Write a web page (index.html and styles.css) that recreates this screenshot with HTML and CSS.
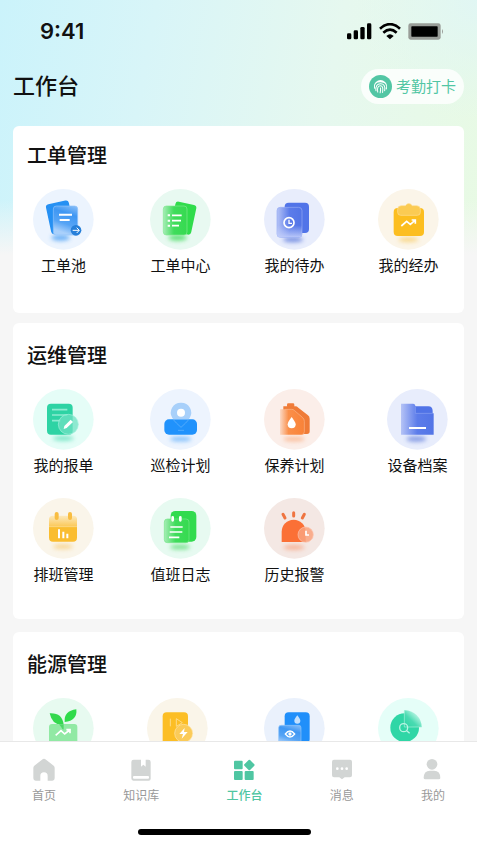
FILE: index.html
```
<!DOCTYPE html>
<html lang="zh-CN">
<head>
  <meta charset="UTF-8">
  <meta name="viewport" content="width=device-width, initial-scale=1.0">
  <title>工作台</title>
  <link rel="stylesheet" href="styles.css">
</head>
<body>
  <!-- shared gradients -->
  <svg class="defs" width="0" height="0" aria-hidden="true">
    <defs>
      <filter id="blur" x="-50%" y="-150%" width="200%" height="400%"><feGaussianBlur stdDeviation="7"/></filter>
      <linearGradient id="gBlue" x1="1" y1="0" x2="0.7" y2="1"><stop offset="0" stop-color="#8cc0f8"/><stop offset="0.35" stop-color="#3f97f3"/><stop offset="0.7" stop-color="#56a4f5"/><stop offset="1" stop-color="#a9d0fb"/></linearGradient>
      <linearGradient id="gGreen" x1="0" y1="0" x2="1" y2="0"><stop offset="0" stop-color="#a5edb5"/><stop offset="0.45" stop-color="#3fdc5b"/><stop offset="1" stop-color="#36da50"/></linearGradient>
      <linearGradient id="gIndigo" x1="0" y1="0" x2="1" y2="0"><stop offset="0" stop-color="#b5c3f6"/><stop offset="0.5" stop-color="#5c7cea"/><stop offset="1" stop-color="#5274e6"/></linearGradient>
      <linearGradient id="gIndigoDown" x1="0" y1="0" x2="0" y2="1"><stop offset="0.6" stop-color="#c3cffa" stop-opacity="0"/><stop offset="1" stop-color="#c3cffa" stop-opacity="0.9"/></linearGradient>
      <linearGradient id="gOrange" x1="0" y1="0" x2="1" y2="0"><stop offset="0" stop-color="#fbd9c5"/><stop offset="0.35" stop-color="#fa8f4a"/><stop offset="1" stop-color="#f98238"/></linearGradient>
      <linearGradient id="gYellow" x1="0" y1="0" x2="0" y2="1"><stop offset="0" stop-color="#fce9bd"/><stop offset="1" stop-color="#fbc95a"/></linearGradient>
      <linearGradient id="gTeal" x1="0" y1="1" x2="1" y2="0"><stop offset="0" stop-color="#2bd4a3"/><stop offset="0.4" stop-color="#4bdbb2"/><stop offset="0.8" stop-color="#c8f8ea"/></linearGradient>
    </defs>
  </svg>

  <div class="app">
    <div class="status-bar">
      <span class="time">9:41</span>
      <div class="status-icons">
        <svg width="25" height="17" viewBox="0 0 75 51">
          <rect x="0" y="31" width="13" height="18" rx="4"/><rect x="20" y="22" width="13" height="27" rx="4"/><rect x="40" y="12" width="13" height="37" rx="4"/><rect x="60" y="1" width="13" height="48" rx="4"/>
        </svg>
        <svg width="22" height="17" viewBox="0 0 66 51">
          <path d="M3 17Q33-10 63 17" fill="none" stroke="#000" stroke-width="8"/>
          <path d="M13 29Q33 11 53 29" fill="none" stroke="#000" stroke-width="8"/>
          <path d="M22 39Q33 29 44 39L33 49Z"/>
        </svg>
        <svg width="36" height="17" viewBox="0 0 108 51">
          <rect x="1" y="1" width="97" height="49" rx="7" fill="#999d98"/>
          <rect x="10" y="10" width="79" height="31" rx="2"/>
          <path d="M102 18Q108 25 102 33Z" fill="#999d98"/>
        </svg>
      </div>
    </div>

    <header class="header">
      <h1>工作台</h1>
      <button class="btn-punch" type="button">
        <svg width="23" height="23" viewBox="0 0 66 66" fill="none" stroke="#fff" stroke-width="3" stroke-linecap="round">
          <circle cx="33" cy="33" r="33" fill="#52c6a4" stroke="none"/>
          <path d="M20 22Q33 10 46 22M16 38Q12 19 33 19Q54 19 50 40M20 45Q18 25 33 25Q48 25 45 45M25 49Q22 31 33 31Q42 31 39 50M32 51Q34 44 33 37"/>
        </svg>
        <span>考勤打卡</span>
      </button>
    </header>

    <main class="content">
      <section class="card card-order">
        <h2>工单管理</h2>
        <div class="grid">
          <a class="entry" href="#">
            <svg viewBox="0 0 183 183">
              <circle cx="91" cy="91" r="91" fill="#ecf4fe"/>
              <ellipse class="shadow" cx="83" cy="146" rx="28" ry="9" fill="#4a9ff5"/>
              <rect x="46" y="39" width="70" height="92" rx="9" fill="#2590f3" transform="rotate(-12 81 85)"/>
              <rect x="61" y="51" width="73" height="87" rx="9" fill="url(#gBlue)" stroke="#8fc3fa" stroke-width="2"/>
              <path d="M78 77H117M80 93H110" stroke="#fff" stroke-width="6"/>
              <circle cx="129" cy="124" r="16" fill="#267fd9"/>
              <path d="M119 124H138M131 116L139 124L131 132" fill="none" stroke="#fff" stroke-width="3"/>
            </svg>
            <span>工单池</span>
          </a>
          <a class="entry" href="#">
            <svg viewBox="0 0 183 183">
              <circle cx="91" cy="91" r="91" fill="#e8f9f1"/>
              <ellipse class="shadow" cx="83" cy="146" rx="28" ry="9" fill="#3fdc5b"/>
              <rect x="68" y="42" width="64" height="91" rx="9" fill="#30dc4c" transform="rotate(12 100 87)"/>
              <rect x="40" y="51" width="71" height="87" rx="9" fill="url(#gGreen)" stroke="#83e993" stroke-width="2"/>
              <path d="M66 79H95M66 95H93M66 110H87" stroke="#fff" stroke-width="5"/>
              <path d="M53 79H60M53 95H60M53 110H60" stroke="#fff" stroke-width="6"/>
            </svg>
            <span>工单中心</span>
          </a>
          <a class="entry" href="#">
            <svg viewBox="0 0 183 183">
              <circle cx="91" cy="91" r="91" fill="#e8edfc"/>
              <ellipse class="shadow" cx="87" cy="152" rx="30" ry="8" fill="#5c79dc"/>
              <rect x="62" y="41" width="73" height="91" rx="12" fill="#5174e8"/>
              <rect x="39" y="55" width="75" height="90" rx="10" fill="url(#gIndigo)" stroke="#96abf4" stroke-width="2"/>
              <rect x="39" y="55" width="75" height="90" rx="10" fill="url(#gIndigoDown)"/>
              <circle cx="75" cy="101" r="15" fill="none" stroke="#fff" stroke-width="5"/>
              <path d="M75 92V103H84" fill="none" stroke="#fff" stroke-width="4"/>
            </svg>
            <span>我的待办</span>
          </a>
          <a class="entry" href="#">
            <svg viewBox="0 0 183 183">
              <circle cx="91" cy="91" r="91" fill="#fbf5e9"/>
              <ellipse class="shadow" cx="91" cy="152" rx="30" ry="7" fill="#f8cf6d"/>
              <rect x="47" y="57" width="91" height="84" rx="12" fill="#fcbe20"/>
              <path d="M59 61Q59 50 70 50H82Q92 37 103 50H116Q127 50 127 61V70Q127 79 118 79H68Q59 79 59 70Z" fill="#fbcb53" stroke="#fde09a" stroke-width="2"/>
              <path d="M70 111L86 97L97 106L111 94M101 93H112V104" fill="none" stroke="#fff" stroke-width="5"/>
            </svg>
            <span>我的经办</span>
          </a>
        </div>
      </section>

      <section class="card card-ops">
        <h2>运维管理</h2>
        <div class="grid">
          <a class="entry" href="#">
            <svg viewBox="0 0 183 183">
              <circle cx="91" cy="91" r="91" fill="#e5fdf7"/>
              <ellipse class="shadow" cx="91" cy="148" rx="32" ry="7" fill="#5ce0b9"/>
              <rect x="42" y="44" width="77" height="93" rx="12" fill="#2ed3a4"/>
              <path d="M57 62H103M57 78H103M57 95H82" stroke="#8cebd0" stroke-width="5"/>
              <circle cx="106" cy="106" r="30" fill="#6fe2c3" fill-opacity="0.75" stroke="#a5f1de" stroke-width="2"/>
              <path d="M94 111L113 92L120 99L101 117L92 120Z" fill="#fff"/>
            </svg>
            <span>我的报单</span>
          </a>
          <a class="entry" href="#">
            <svg viewBox="0 0 183 183">
              <circle cx="91" cy="91" r="91" fill="#edf4fe"/>
              <ellipse class="shadow" cx="92" cy="150" rx="32" ry="7" fill="#65b1fb"/>
              <rect x="43" y="91" width="98" height="46" rx="14" fill="#2092fc"/>
              <path d="M93 41A30 30 0 0 1 119 87L116 91H70L67 87A30 30 0 0 1 93 41Z" fill="#a8d0fa"/>
              <path d="M69 91Q78 102 93 115Q108 102 117 91M84 124H102" fill="none" stroke="#6ab6fc" stroke-width="2"/>
              <circle cx="93" cy="71" r="12" fill="#fff"/>
            </svg>
            <span>巡检计划</span>
          </a>
          <a class="entry" href="#">
            <svg viewBox="0 0 183 183">
              <circle cx="91" cy="91" r="91" fill="#fbeee9"/>
              <ellipse class="shadow" cx="90" cy="150" rx="32" ry="7" fill="#fab085"/>
              <rect x="69" y="43" width="22" height="12" rx="4" fill="#f07c3a"/>
              <path d="M58 52H94Q99 52 103 56L131 78Q137 82 137 89V127Q137 135 129 135H58Z" fill="#ef7b37"/>
              <path d="M48 61H83Q88 61 92 65L115 85Q121 90 121 97V128Q121 137 113 137H48Z" fill="url(#gOrange)"/>
              <path d="M62 61H83Q88 61 92 65L115 85Q121 90 121 97V128Q121 137 113 137" fill="none" stroke="#fbb58a" stroke-width="2"/>
              <path d="M83 84Q95 100 95 106A12 12 0 0 1 71 106Q71 99 83 84Z" fill="#fff"/>
            </svg>
            <span>保养计划</span>
          </a>
          <a class="entry" href="#">
            <svg viewBox="0 0 183 183">
              <circle cx="91" cy="91" r="91" fill="#e8edfc"/>
              <ellipse class="shadow" cx="88" cy="150" rx="30" ry="8" fill="#6d87df"/>
              <path d="M64 52H124Q137 52 137 66V132H64Z" fill="#5073e7"/>
              <path d="M42 44H78Q85 44 85 52V73H140V137H42Z" fill="url(#gIndigo)"/>
              <path d="M85 54V73H137" fill="none" stroke="#8ba3f3" stroke-width="2"/>
              <path d="M66 117H117" stroke="#fff" stroke-width="6"/>
            </svg>
            <span>设备档案</span>
          </a>
          <a class="entry" href="#">
            <svg viewBox="0 0 183 183">
              <circle cx="91" cy="91" r="91" fill="#faf5ea"/>
              <ellipse class="shadow" cx="90" cy="146" rx="30" ry="7" fill="#f6cd7c"/>
              <rect x="48" y="58" width="84" height="73" rx="12" fill="#fabd30"/>
              <path d="M48 85V64Q48 53 59 53H121Q132 53 132 64V85Z" fill="url(#gYellow)"/>
              <path d="M48 86H132" stroke="#fde4a9" stroke-width="2"/>
              <path d="M71 48V60M111 48V60" stroke="#f8bd41" stroke-width="12" stroke-linecap="round"/>
              <path d="M78 94V121M91 101V121M103 107V121" stroke="#fff" stroke-width="6"/>
            </svg>
            <span>排班管理</span>
          </a>
          <a class="entry" href="#">
            <svg viewBox="0 0 183 183">
              <circle cx="91" cy="91" r="91" fill="#e7faf1"/>
              <ellipse class="shadow" cx="90" cy="147" rx="30" ry="7" fill="#54dc70"/>
              <rect x="62" y="39" width="77" height="92" rx="14" fill="#32db4e"/>
              <rect x="43" y="63" width="74" height="71" rx="9" fill="url(#gGreen)" stroke="#77e68a" stroke-width="2"/>
              <path d="M68 58V67M91 58V67" stroke="#fff" stroke-width="8" stroke-linecap="round"/>
              <path d="M61 87H98M59 102H97M57 118H88" stroke="#fff" stroke-width="5"/>
            </svg>
            <span>值班日志</span>
          </a>
          <a class="entry" href="#">
            <svg viewBox="0 0 183 183">
              <circle cx="91" cy="91" r="91" fill="#f4e8e4"/>
              <ellipse class="shadow" cx="90" cy="148" rx="32" ry="7" fill="#f7a17e"/>
              <path d="M53 132V101A36 36 0 0 1 125 101V132Z" fill="#fb7036"/>
              <path d="M57 49L63 60M89 44V54M121 49L115 60" stroke="#ef7440" stroke-width="9" stroke-linecap="round"/>
              <circle cx="125" cy="110" r="23" fill="#f9a27e" fill-opacity="0.85" stroke="#fcc6b0" stroke-width="2"/>
              <path d="M126 98V111H135" fill="none" stroke="#fff" stroke-width="5"/>
            </svg>
            <span>历史报警</span>
          </a>
        </div>
      </section>

      <section class="card card-energy">
        <h2>能源管理</h2>
        <div class="grid">
          <a class="entry" href="#">
            <svg viewBox="0 0 183 183">
              <circle cx="91" cy="91" r="91" fill="#e7faf0"/>
              <path d="M50 46Q88 44 92 80Q58 84 50 46Z" fill="#34d84e"/>
              <path d="M130 34Q134 68 95 72Q92 39 130 34Z" fill="#30db4b"/>
              <rect x="48" y="78" width="85" height="70" rx="9" fill="#91e9a4"/>
              <path d="M78 79H92V94Q88 96 85 88Z" fill="#4fd769"/>
              <path d="M68 112L84 98L95 108L110 96M100 95H111V106" fill="none" stroke="#fff" stroke-width="5"/>
            </svg>
          </a>
          <a class="entry" href="#">
            <svg viewBox="0 0 183 183">
              <circle cx="91" cy="91" r="91" fill="#faf5e9"/>
              <rect x="47" y="43" width="76" height="100" rx="12" fill="#fcbe25"/>
              <path d="M70 62V85M88 62V85L106 74Z" fill="none" stroke="#fddb86" stroke-width="3"/>
              <circle cx="110" cy="106" r="27" fill="#fbcb58" stroke="#fde4ab" stroke-width="2"/>
              <path d="M113 90L97 108H108L104 122L122 102H111Z" fill="#fff"/>
            </svg>
          </a>
          <a class="entry" href="#">
            <svg viewBox="0 0 183 183">
              <circle cx="91" cy="91" r="91" fill="#eaf1fc"/>
              <rect x="62" y="43" width="75" height="92" rx="12" fill="#208ffa"/>
              <path d="M100 52Q109 64 109 68A9 9 0 0 1 91 68Q91 63 100 52Z" fill="#c3e0fd"/>
              <rect x="44" y="82" width="67" height="62" rx="7" fill="url(#gBlue)" stroke="#90c6fb" stroke-width="2"/>
              <path d="M64 108Q78 90 92 108Q78 126 64 108Z" fill="none" stroke="#fff" stroke-width="4"/>
              <circle cx="78" cy="108" r="5" fill="#fff"/>
            </svg>
          </a>
          <a class="entry" href="#">
            <svg viewBox="0 0 183 183">
              <circle cx="91" cy="91" r="91" fill="#e5fef8"/>
              <circle cx="80" cy="89" r="43" fill="#30d6a6"/>
              <path d="M79 37A50 50 0 0 1 131 87H79Z" fill="url(#gTeal)"/>
              <path d="M79 38V87H131" fill="none" stroke="#a6f2db" stroke-width="2"/>
              <circle cx="77" cy="89" r="12" fill="none" stroke="#baf3e3" stroke-width="4"/>
              <path d="M86 98L95 106" stroke="#baf3e3" stroke-width="4"/>
            </svg>
          </a>
        </div>
      </section>
    </main>

    <nav class="tab-bar">
      <div class="tabs">
        <a class="tab" href="#">
          <svg viewBox="0 0 72 72"><path d="M30 5Q36 0 42 5L65 23Q68 26 68 30V61Q68 68 61 68H47V54A11 11 0 0 0 25 54V68H11Q4 68 4 61V30Q4 26 7 23Z"/></svg>
          <span>首页</span>
        </a>
        <a class="tab" href="#">
          <svg viewBox="0 0 72 72"><path d="M14 5H36V26L43 20L50 26V5H58Q65 5 65 12V62Q65 68 59 68H13Q7 68 7 61V12Q7 5 14 5Z"/><rect x="12" y="54" width="48" height="8" rx="3" fill="#fff"/></svg>
          <span>知识库</span>
        </a>
        <a class="tab active" href="#">
          <svg viewBox="0 0 72 72"><rect x="6" y="8" width="26" height="26" rx="3"/><rect x="6" y="39" width="26" height="27" rx="3"/><rect x="38" y="39" width="27" height="27" rx="3"/><rect x="40" y="9" width="24" height="24" rx="3" transform="rotate(45 52 21)"/></svg>
          <span>工作台</span>
        </a>
        <a class="tab" href="#">
          <svg viewBox="0 0 72 72"><path d="M12 5H60Q66 5 66 11V52Q66 58 60 58H44L36 64L28 58H12Q6 58 6 52V11Q6 5 12 5Z"/><g fill="#fff"><circle cx="22" cy="32" r="4"/><circle cx="36" cy="32" r="4"/><circle cx="50" cy="32" r="4"/></g></svg>
          <span>消息</span>
        </a>
        <a class="tab" href="#">
          <svg viewBox="0 0 72 72"><circle cx="33" cy="19" r="16"/><path d="M8 60Q8 38 27 38H39Q58 38 58 60Q58 64 53 64H13Q8 64 8 60Z"/></svg>
          <span>我的</span>
        </a>
      </div>
      <div class="home-indicator"></div>
    </nav>
  </div>
</body>
</html>
```
FILE: styles.css
```
* { margin: 0; padding: 0; box-sizing: border-box; }
body {
  font-family: "Noto Sans CJK SC", sans-serif;
  color: #111;
  background-color: #f6f6f6;
}
a { color: inherit; text-decoration: none; }
.defs { position: absolute; }
.app {
  display: flex;
  flex-direction: column;
  height: 100vh;
  background:
    linear-gradient(180deg, rgba(246, 246, 246, 0) 200px, #f6f6f6 255px),
    radial-gradient(circle at 100% 0, rgba(224, 246, 245, 0.9), rgba(224, 246, 245, 0) 120px),
    linear-gradient(100deg, #cbf3fb 0%, #d8f5f8 25%, #e6f8ef 55%, #e8fae3 85%, #e6faea 100%);
}

/* status bar */
.status-bar {
  display: flex;
  justify-content: space-between;
  align-items: center;
  height: 62px;
  padding: 0 33px 0 40px;
}
.time {
  font-family: Inter, sans-serif;
  font-size: 22px;
  font-weight: 600;
}
.status-icons { display: flex; gap: 7px; }

.header {
  display: flex;
  justify-content: space-between;
  align-items: center;
  height: 48px;
  margin-bottom: 16px;
  padding: 0 13px;
}
h1 {
  padding-bottom: 4px;
  font-size: 22px;
  font-weight: 500;
  line-height: 32px;
}
.btn-punch {
  display: flex;
  align-items: center;
  gap: 4px;
  height: 35px;
  padding: 0 8px;
  border: none;
  border-radius: 18px;
  background-color: rgba(255, 255, 255, 0.8);
  color: #52c6a4;
  font-family: inherit;
  font-size: 15px;
  cursor: pointer;
}
.btn-punch span { padding-bottom: 2px; }

/* cards */
.content {
  flex: 1;
  min-height: 0;
  padding: 0 13px;
  overflow-y: auto;
  scrollbar-width: none;
}
.card {
  margin-bottom: 13px;
  padding: 17px 26px 35px 20px;
  border-radius: 6px;
  background-color: #fff;
}
h2 {
  margin: 0 0 19px -6px;
  font-size: 20px;
  font-weight: 500;
  line-height: 30px;
}
.grid {
  display: grid;
  grid-template-columns: 117fr 114fr 114fr 60px;
  row-gap: 23px;
}
.card-order { margin-bottom: 10px; padding-top: 14px; padding-bottom: 38px; }
.card-ops { padding-right: 17px; }
.card-ops .grid { grid-template-columns: 117fr 114fr 123fr 60px; }
.card-energy .grid { grid-template-columns: 114fr 118fr 114fr 60px; }
.entry {
  display: flex;
  flex-direction: column;
  align-items: center;
  gap: 5px;
  width: 61px;
  font-size: 15px;
  line-height: 20px;
  white-space: nowrap;
}
.entry svg { width: 61px; height: 61px; }
.shadow { filter: url(#blur); opacity: 0.8; }

/* bottom tabs */
.tab-bar {
  height: 109px;
  padding-top: 16px;
  border-top: 1px solid #e8e8e8;
  background-color: #fff;
}
.tabs {
  display: flex;
  justify-content: space-between;
  padding: 0 32px;
}
.tab {
  display: flex;
  flex-direction: column;
  align-items: center;
  gap: 4px;
  color: #999;
  font-size: 12px;
  line-height: 18px;
}
.tab svg { width: 24px; height: 24px; fill: #d2d5d4; }
.active { color: #4fc6a2; font-weight: 500; }
.active svg { fill: #4fc6a2; }
.home-indicator {
  width: 173px;
  height: 6px;
  margin: 25px 0 0 29%;
  border-radius: 3px;
  background-color: #000;
}
```
